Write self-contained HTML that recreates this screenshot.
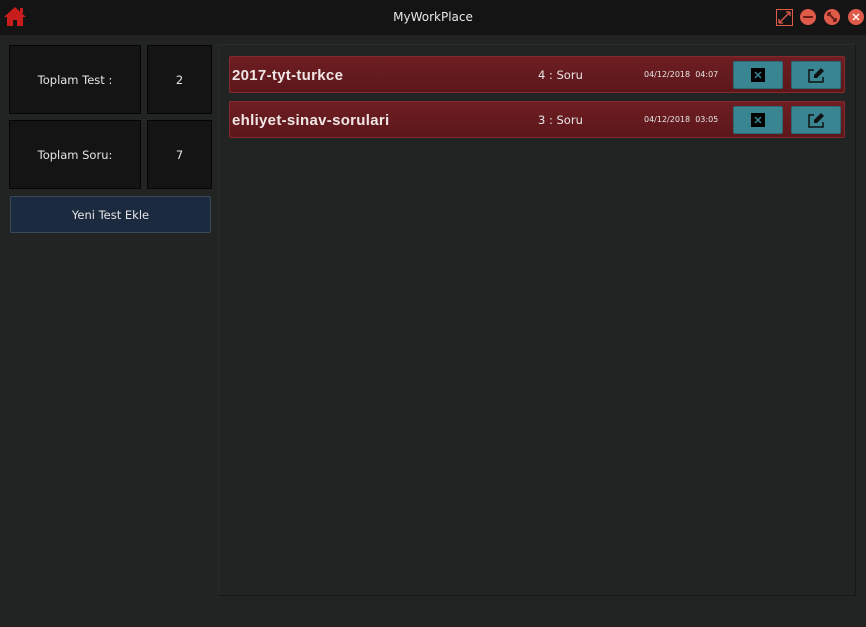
<!DOCTYPE html>
<html><head><meta charset="utf-8"><style>
*{margin:0;padding:0;box-sizing:border-box}
body{width:866px;height:627px;background:#222424;font-family:"DejaVu Sans","Liberation Sans",sans-serif;color:#e6e6e6;position:relative;overflow:hidden}
.title{position:absolute;left:0;top:0;width:866px;height:35px;background:#141414}
.title .t{position:absolute;left:0;width:866px;top:10px;text-align:center;font-size:12px;color:#e8e8e8}
.box{position:absolute;background:#141414;border:1px solid #050505;font-size:11.5px;display:flex;align-items:center;justify-content:center}
.btn{position:absolute;left:10px;top:196px;width:201px;height:37px;background:#1b2a3f;border:1px solid #3a4a5c;border-radius:2px;font-size:11.5px;display:flex;align-items:center;justify-content:center}
.panel{position:absolute;left:218px;top:44px;width:638px;height:552px;background:#222424;border:1px solid #171818;border-left-color:#2a2c2c;border-top-color:#2a2c2c}
.row{position:absolute;left:229px;width:616px;height:37px;background:linear-gradient(#6e1e22,#5c171b);border:1px solid #842a2e;border-radius:2px}
.row .n{position:absolute;left:2px;top:10px;font-family:"Liberation Sans",sans-serif;font-size:15px;font-weight:bold;color:#f0e6e6;letter-spacing:0.3px}
.row .c{position:absolute;left:308px;top:11px;font-size:11.5px}
.row .d{position:absolute;left:414px;top:13px;font-size:8px}
.tb{position:absolute;top:4px;width:50px;height:28px;background:#3a8592;border:1px solid #2b6a74;border-radius:2px}
.circ{position:absolute;top:9px;width:16px;height:16px;border-radius:50%;background:#e05a4a}
</style></head><body>
<div class="title"><div class="t">MyWorkPlace</div>
<svg style="position:absolute;left:3px;top:6px" width="24" height="22" viewBox="0 0 24 22"><path d="M1 11 L12 1 L23 11 L20 11 L20 20 L14 20 L14 14 L10 14 L10 20 L4 20 L4 11 Z" fill="#c81d1d"/><rect x="17" y="2" width="3" height="5" fill="#c81d1d"/></svg>
<svg style="position:absolute;left:776px;top:9px" width="17" height="17"><rect x="0.5" y="0.5" width="16" height="16" fill="none" stroke="#e05a4a"/><path d="M3 14 L14 3 M3 14 L3 10 M3 14 L7 14 M14 3 L10 3 M14 3 L14 7" stroke="#e05a4a" stroke-width="1.3" fill="none"/></svg>
<div class="circ" style="left:800px"><div style="position:absolute;left:3px;top:7px;width:10px;height:2px;background:#6e2018"></div></div>
<div class="circ" style="left:824px"><svg width="16" height="16"><path d="M4 4 L12 12 M4 4h3M4 4v3M12 12h-3M12 12v-3" stroke="#6e2018" stroke-width="2" fill="none"/></svg></div>
<div class="circ" style="left:848px"><svg width="16" height="16"><path d="M5 5 L11 11 M11 5 L5 11" stroke="#fff" stroke-width="1.4"/></svg></div>
</div>
<div class="box" style="left:9px;top:45px;width:132px;height:69px">Toplam Test :</div>
<div class="box" style="left:147px;top:45px;width:65px;height:69px">2</div>
<div class="box" style="left:9px;top:120px;width:132px;height:69px">Toplam Soru:</div>
<div class="box" style="left:147px;top:120px;width:65px;height:69px">7</div>
<div class="btn">Yeni Test Ekle</div>
<div class="panel"></div>
<div class="row" style="top:56px"><div class="n">2017-tyt-turkce</div><div class="c">4 : Soru</div><div class="d">04/12/2018&nbsp; 04:07</div>
<div class="tb" style="left:503px"><svg width="48" height="26"><rect x="17" y="6" width="14" height="14" fill="#000"/><path d="M21 10 L27 16 M27 10 L21 16" stroke="#3a8592" stroke-width="1.5"/></svg></div>
<div class="tb" style="left:561px"><svg width="48" height="26"><path d="M22 8 H17 V20 H31 V15" stroke="#111" stroke-width="1.5" fill="none"/><path d="M22 16 L22 13 L29 6 L32 9 L25 16 Z" fill="#111"/></svg></div></div>
<div class="row" style="top:101px"><div class="n">ehliyet-sinav-sorulari</div><div class="c">3 : Soru</div><div class="d">04/12/2018&nbsp; 03:05</div>
<div class="tb" style="left:503px"><svg width="48" height="26"><rect x="17" y="6" width="14" height="14" fill="#000"/><path d="M21 10 L27 16 M27 10 L21 16" stroke="#3a8592" stroke-width="1.5"/></svg></div>
<div class="tb" style="left:561px"><svg width="48" height="26"><path d="M22 8 H17 V20 H31 V15" stroke="#111" stroke-width="1.5" fill="none"/><path d="M22 16 L22 13 L29 6 L32 9 L25 16 Z" fill="#111"/></svg></div></div>
</body></html>
